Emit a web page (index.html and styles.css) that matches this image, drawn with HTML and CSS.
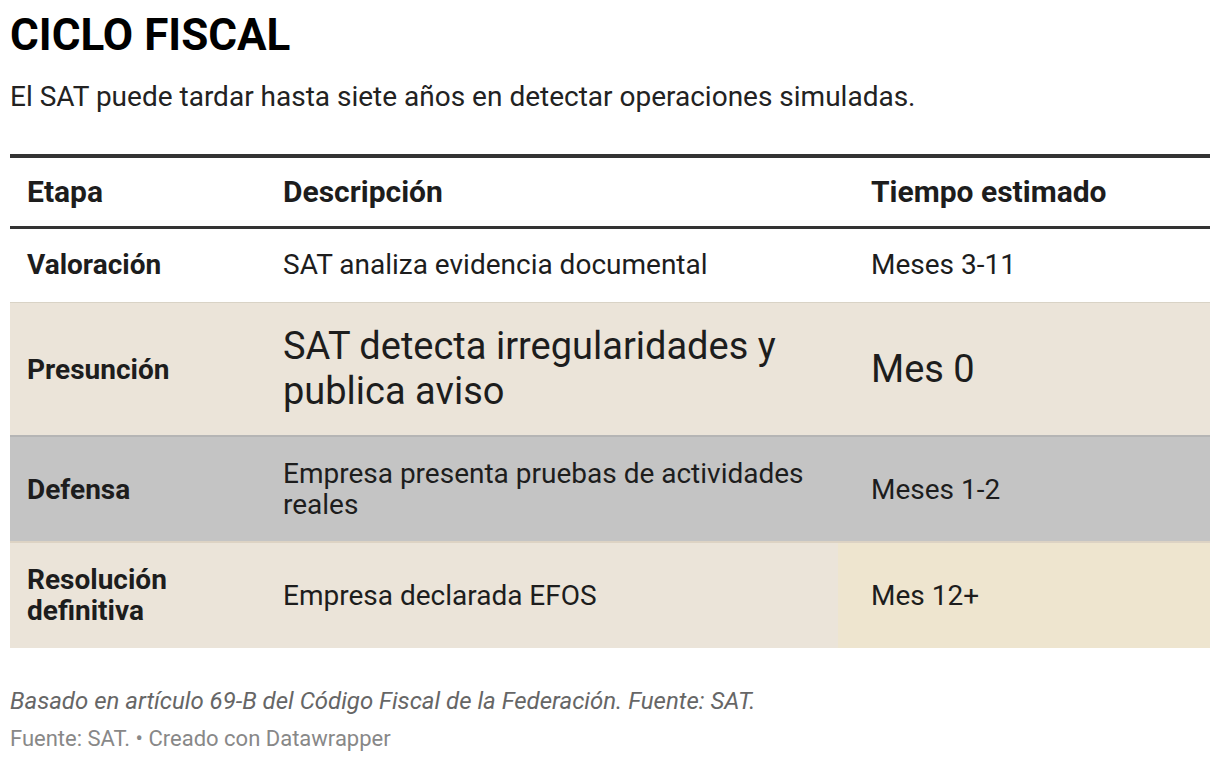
FILE: index.html
```html
<!DOCTYPE html>
<html lang="es">
<head>
<meta charset="utf-8">
<title>Ciclo fiscal</title>
<link rel="stylesheet" href="styles.css">
</head>
<body>
<div class="chart">
  <h1 class="title">CICLO FISCAL</h1>
  <p class="subtitle">El SAT puede tardar hasta siete años en detectar operaciones simuladas.</p>
  <table class="tbl">
    <thead>
      <tr>
        <th class="c1">Etapa</th>
        <th class="c2">Descripción</th>
        <th class="c3">Tiempo estimado</th>
      </tr>
    </thead>
    <tbody>
      <tr class="r-val">
        <td class="c1 stage">Valoración</td>
        <td class="c2">SAT analiza evidencia documental</td>
        <td class="c3">Meses 3-11</td>
      </tr>
      <tr class="r-pre">
        <td class="c1 stage">Presunción</td>
        <td class="c2 big">SAT detecta irregularidades y publica aviso</td>
        <td class="c3 big">Mes 0</td>
      </tr>
      <tr class="r-def">
        <td class="c1 stage">Defensa</td>
        <td class="c2">Empresa presenta pruebas de actividades reales</td>
        <td class="c3">Meses 1-2</td>
      </tr>
      <tr class="r-res">
        <td class="c1 stage">Resolución definitiva</td>
        <td class="c2">Empresa declarada EFOS</td>
        <td class="c3 hl">Mes 12+</td>
      </tr>
    </tbody>
  </table>
  <p class="notes">Basado en artículo 69-B del Código Fiscal de la Federación. Fuente: SAT.</p>
  <p class="byline">Fuente: SAT. • Creado con Datawrapper</p>
</div>
</body>
</html>
```
FILE: styles.css
```css
* { box-sizing: border-box; }
html, body { margin: 0; padding: 0; background: #fff; }
body { font-family: Roboto, "Liberation Sans", sans-serif; color: #1d1d1d; }
.chart { padding: 10px 10px 0 10px; }
.title {
  margin: 0;
  font-size: 44px;
  font-weight: 700;
  line-height: 50px;
  color: #000;
}
.subtitle {
  margin: 20px 0 0 0;
  font-size: 28px;
  line-height: 34px;
  color: #222;
}
.tbl {
  margin-top: 40px;
  width: 1200px;
  border-collapse: collapse;
  table-layout: fixed;
  font-size: 28px;
  line-height: 31px;
}
.tbl thead tr { border-top: 4px solid #333; border-bottom: 3px solid #333; }
.tbl th {
  text-align: left;
  font-size: 30px;
  font-weight: 700;
  line-height: 31px;
  padding: 18px 17px 19px 17px;
  color: #1d1d1d;
}
.tbl td { padding: 20px 17px; vertical-align: middle; }
.c1 { width: 256px; }
.c2 { width: 572px; }
.c3 { width: 372px; padding-left: 33px !important; }
.stage { font-weight: 700; }
.big { font-size: 38px; line-height: 45px; }
.r-val { border-bottom: 1px solid #d9d3c6; }
.r-val td { padding-bottom: 22px; }
.r-pre { background: #ebe4d9; border-bottom: 2px solid #b5b5b5; }
.r-pre td { padding-top: 21px; padding-bottom: 21px; }
.r-def { background: #c4c4c4; border-bottom: 2px solid #ddd3c4; }
.r-def td { padding-top: 21px; padding-bottom: 21px; }
.r-res { background: #ebe4d9; }
.r-res td { padding-top: 21px; padding-bottom: 22px; }
.hl { background: #eee5cf; }
.notes {
  margin: 39px 0 0 0;
  font-size: 24px;
  line-height: 28px;
  font-style: italic;
  color: #666;
}
.byline {
  margin: 11px 0 0 0;
  font-size: 22px;
  line-height: 26px;
  color: #888;
}
```
